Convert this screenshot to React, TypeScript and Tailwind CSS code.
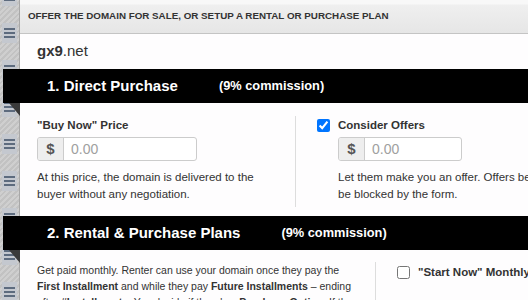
import React from "react";

function Burger() {
  return (
    <div className="h-[37px] w-full flex items-center justify-center">
      <div className="w-[15px] h-[20px] bg-[#c4c8cf] flex flex-col items-center justify-center gap-[2px]">
        <div className="w-[11px] h-[2px] bg-[#5d6b7e]" />
        <div className="w-[11px] h-[2px] bg-[#5d6b7e]" />
        <div className="w-[11px] h-[2px] bg-[#5d6b7e]" />
      </div>
    </div>
  );
}

function Band({ title, gap }: { title: string; gap: string }) {
  return (
    <div className="relative -ml-[17px] h-[34px] bg-black text-white flex items-center pl-[44px] shrink-0">
      <span className="text-[15px] font-bold">{title}</span>
      <span className={"text-[12.8px] font-bold " + gap}>(9% commission)</span>
      <svg className="absolute left-0 top-full" width="17" height="13" viewBox="0 0 17 13">
        <polygon points="6,0 17,0 17,13" fill="#3a3a3a" />
      </svg>
    </div>
  );
}

function PriceInput({ w }: { w: string }) {
  return (
    <div className={"flex h-[24px] border border-[#cccccc] rounded-[3px] overflow-hidden bg-white " + w}>
      <div className="w-[26px] bg-[#eeeeee] border-r border-[#cccccc] flex items-center justify-center text-[15px] font-bold text-[#555555]">
        $
      </div>
      <div className="flex items-center pl-[7px] text-[14px] text-[#a0a0a0]">0.00</div>
    </div>
  );
}

export default function App() {
  return (
    <div className="flex w-[528px] h-[300px] overflow-hidden font-['Liberation_Sans',Arial,sans-serif] text-[#333333]">
      <div className="w-[20px] shrink-0 border-r border-[#a8a8a8] bg-[repeating-linear-gradient(135deg,#cfcfcf_0px,#cfcfcf_2px,#c2c2c2_2px,#c2c2c2_4px)] overflow-hidden">
        <div className="-mt-[23px] flex flex-col">
          {Array.from({ length: 9 }).map((_, i) => (
            <Burger key={i} />
          ))}
        </div>
      </div>
      <div className="flex-1 min-w-0 bg-[#fefdfe] flex flex-col">
        <div className="h-[34px] shrink-0 border-b border-[#c4c4c4] bg-[linear-gradient(#f8f8f8_0px,#f8f8f8_4px,#efefef_5px,#e6e6e6_100%)] flex items-center pl-[8px] text-[9.8px] font-bold uppercase text-[#333333] whitespace-nowrap">
          Offer the domain for sale, or setup a rental or purchase plan
        </div>
        <div className="h-[35px] shrink-0 flex items-center pl-[17px] text-[15px]">
          <span className="font-bold">gx9</span>
          <span>.net</span>
        </div>
        <Band title="1. Direct Purchase" gap="ml-[41px]" />
        <div className="flex px-[17px] pt-[13px] pb-[9px] shrink-0">
          <div className="w-[259px] shrink-0 border-r border-[#dddddd] pt-[1px] pb-[4px] pr-[20px]">
            <div className="h-[16px] leading-[16px] text-[11.5px] font-bold">"Buy Now" Price</div>
            <div className="mt-[4px]">
              <PriceInput w="w-[160px]" />
            </div>
            <p className="mt-[8px] text-[11.5px] leading-[17px]">
              At this price, the domain is delivered to the buyer without any negotiation.
            </p>
          </div>
          <div className="pl-[21px] pt-[1px] shrink-0 w-[300px]">
            <label className="h-[16px] flex items-center gap-[8px]">
              <input type="checkbox" defaultChecked className="m-0 w-[13px] h-[13px] accent-[#0075ff]" />
              <span className="text-[11.5px] font-bold leading-[16px]">Consider Offers</span>
            </label>
            <div className="pl-[21px]">
              <div className="mt-[4px]">
                <PriceInput w="w-[124px]" />
              </div>
              <p className="mt-[8px] text-[11.5px] leading-[17px] whitespace-nowrap">
                Let them make you an offer. Offers below your minimum will
                <br />
                be blocked by the form.
              </p>
            </div>
          </div>
        </div>
        <Band title="2. Rental & Purchase Plans" gap="ml-[41px]" />
        <div className="flex px-[17px] pt-[12px] shrink-0">
          <div className="w-[339px] shrink-0 border-r border-[#dddddd] pr-[20px] pt-0">
            <p className="text-[10.5px] leading-[16px]">
              Get paid monthly. Renter can use your domain once they pay the{" "}
              <b>First Installment</b> and while they pay <b>Future Installments</b> – ending after{" "}
              <b>#Installments</b>. You decide if there's a <b>Purchase Option</b>. If the renter stops
              paying, the domain returns to you.
            </p>
          </div>
          <div className="pl-[21px] pt-[4px] shrink-0 w-[300px]">
            <label className="h-[13px] flex items-center gap-[8px]">
              <input type="checkbox" className="m-0 w-[13px] h-[13px]" />
              <span className="text-[11.5px] font-bold whitespace-nowrap">"Start Now" Monthly Plan</span>
            </label>
          </div>
        </div>
      </div>
    </div>
  );
}
